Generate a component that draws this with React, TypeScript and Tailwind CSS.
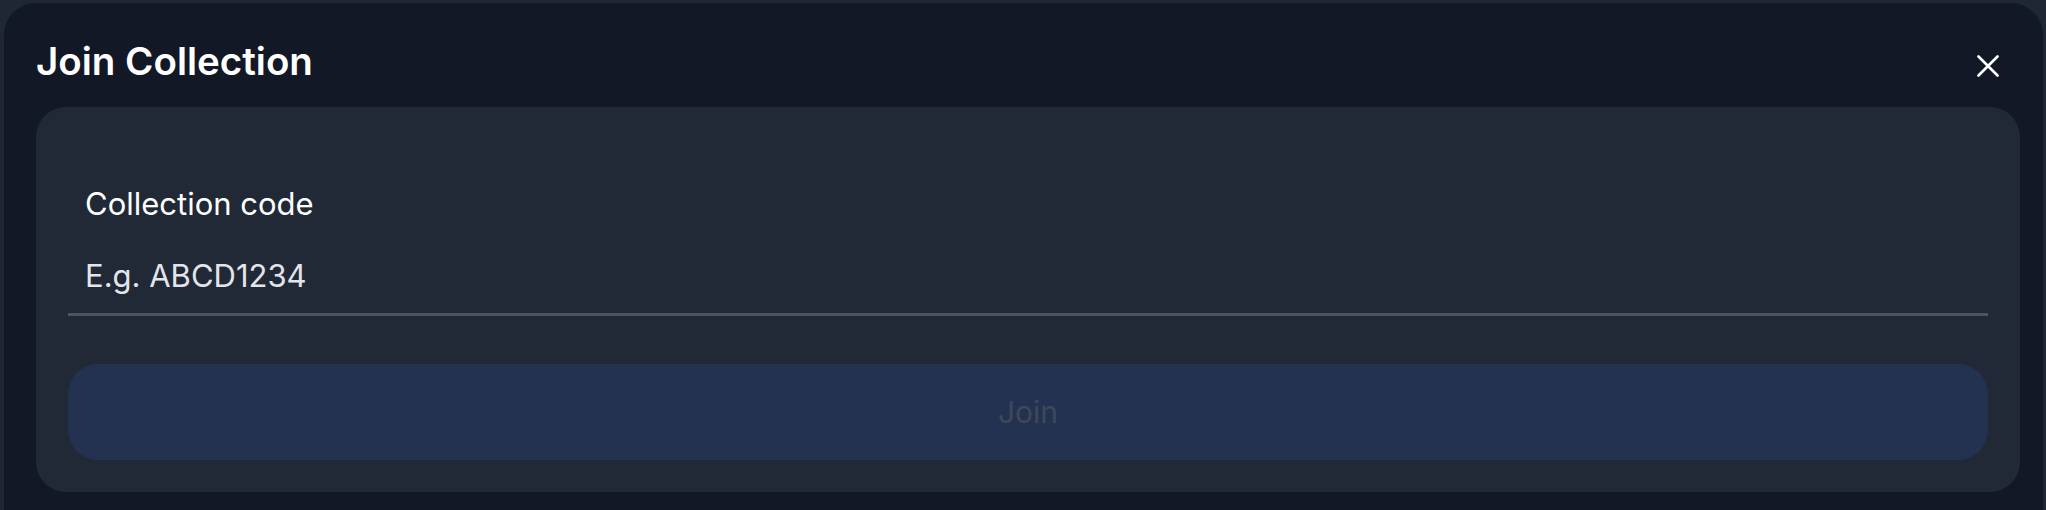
export default function App() {
  return (
    <div
      className="h-[510px] w-[2046px] overflow-hidden bg-[#1f2734] pt-[3px] pl-[4px]"
      style={{ fontFamily: "Inter, 'Noto Sans', sans-serif" }}
    >
      <div className="flex h-[540px] w-[2039px] flex-col rounded-[32px] bg-[#121826]">
        {/* Header */}
        <div className="flex items-start justify-between pt-[35px] pl-[32px] pr-[44px]">
          <h2 className="text-[38.5px] font-semibold leading-[46px] text-white">Join Collection</h2>
          <button className="mt-[17px] text-white" aria-label="Close">
            <svg width="22" height="22" viewBox="0 0 22 22" fill="none">
              <path d="M1.5 1.5L20.5 20.5M20.5 1.5L1.5 20.5" stroke="currentColor" strokeWidth="2.6" strokeLinecap="round" />
            </svg>
          </button>
        </div>

        {/* Card */}
        <div className="mt-[23px] ml-[32px] w-[1984px] rounded-[30px] bg-[#212936] px-[32px] pt-[78px] pb-[32px]">
          <div className="px-[17px]">
            <label className="block text-[31px] leading-[37px] text-white">Collection code</label>
            <input
              placeholder="E.g. ABCD1234"
              className="mt-[35px] block w-full bg-transparent text-[31px] leading-[37px] text-white outline-none placeholder:text-[#e3e5ea]"
            />
          </div>
          <div className="mt-[19px] h-[3px] bg-[#4c5361]" />
          <button
            disabled
            className="mt-[48px] flex h-[96px] w-full items-center justify-center rounded-[30px] bg-[#243251] text-[30px] text-[#3f4859]"
          >
            Join
          </button>
        </div>
      </div>
    </div>
  );
}
